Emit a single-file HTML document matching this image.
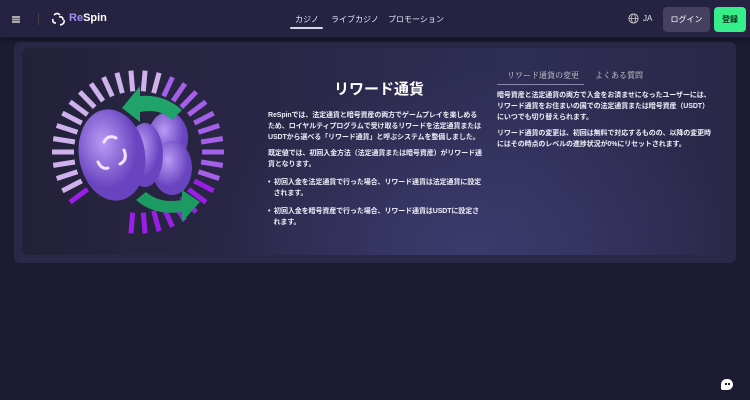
<!DOCTYPE html>
<html><head><meta charset="utf-8"><style>
*{margin:0;padding:0;box-sizing:border-box}
body{width:750px;height:400px;overflow:hidden;background:#1c1b31;font-family:"Liberation Sans","Noto Sans CJK JP",sans-serif;color:#fff;position:relative}
.hdr{position:absolute;left:0;top:0;width:750px;height:38px;background:#252341;border-bottom:1px solid #1a1930;box-shadow:0 2px 4px rgba(0,0,0,.3)}
.nav{position:absolute;top:14px;font-size:8px;color:#e8e6f5}
.outer{position:absolute;left:14px;top:42px;width:722px;height:221px;background:#2a2846;border-radius:6px}
.inner{position:absolute;left:22px;top:48px;width:706px;height:207px;border-radius:6px;background:radial-gradient(ellipse 260px 180px at 450px 200px,#3c3a6c,transparent),linear-gradient(90deg,#232139 0%,#2a2848 40%,#2f2e55 70%,#2a2848 100%)}
.t{font-size:7px;line-height:11px;color:#eeeef8;font-weight:bold;letter-spacing:-.1px}
</style></head><body>
<div class="hdr">
 <div style="position:absolute;left:12px;top:16px;width:8px;height:1.5px;background:#aaa;box-shadow:0 2.5px 0 #aaa,0 5px 0 #aaa"></div>
 <div style="position:absolute;left:38px;top:13px;width:1px;height:12px;background:#444"></div>
 <svg style="position:absolute;left:51px;top:11px" width="16" height="16" viewBox="0 0 16 16"><path d="M3 4 Q6 1 9 4 M2 8 Q1 12 5 12 M13 9 Q14 13 9 14 M8 6 Q12 5 12 9" stroke="#fff" stroke-width="1.6" fill="none"/></svg>
 <div style="position:absolute;left:69px;top:12px;font-size:11px;font-weight:bold"><span style="color:#a48cf0">Re</span>Spin</div>
 <div class="nav" style="left:295px">カジノ</div>
 <div style="position:absolute;left:290px;top:27px;width:33px;height:2px;background:#d8d6ea;border-radius:1px"></div>
 <div class="nav" style="left:331px">ライブカジノ</div>
 <div class="nav" style="left:388px">プロモーション</div>
 <svg style="position:absolute;left:628px;top:13px" width="11" height="11" viewBox="0 0 11 11"><circle cx="5.5" cy="5.5" r="4.6" fill="none" stroke="#ccc" stroke-width=".9"/><ellipse cx="5.5" cy="5.5" rx="2" ry="4.6" fill="none" stroke="#ccc" stroke-width=".8"/><path d="M1 5.5H10" stroke="#ccc" stroke-width=".8"/></svg>
 <div class="nav" style="left:643px;top:14px">JA</div>
 <div style="position:absolute;left:663px;top:7px;width:47px;height:25px;background:#45405f;border-radius:4px;font-size:8px;text-align:center;line-height:25px">ログイン</div>
 <div style="position:absolute;left:714px;top:7px;width:32px;height:25px;background:#36ef8a;border-radius:4px;font-size:8px;font-weight:bold;color:#0c2a1a;text-align:center;line-height:25px">登録</div>
</div>
<div class="outer"></div>
<div class="inner"></div>
<svg style="position:absolute;left:40px;top:60px" width="190" height="180" viewBox="0 0 190 180">
 <defs><radialGradient id="c" cx="40%" cy="35%"><stop offset="0" stop-color="#b89cf5"/><stop offset="1" stop-color="#6a44c0"/></radialGradient></defs>
 <g id="ring" transform="translate(98,92)"></g>
 <ellipse cx="128" cy="78" rx="20" ry="26" fill="url(#c)"/>
 <ellipse cx="132" cy="108" rx="20" ry="27" fill="url(#c)"/>
 <ellipse cx="105" cy="95" rx="18" ry="32" fill="url(#c)"/>
 <ellipse cx="72" cy="95" rx="33" ry="46" fill="url(#c)" transform="rotate(-10 72 95)"/>
 <g stroke="#f0e4ff" stroke-width="3" fill="none" stroke-linecap="round"><path d="M64 82 Q68 74 76 78 M84 90 Q88 100 80 104 M58 102 Q62 110 68 108"/></g>
 <path d="M82 48 L100 26 L100 36 Q124 34 142 50 L132 60 Q120 48 100 52 L100 62 Z" fill="#1fa36a"/>
 <path d="M160 142 L142 162 L142 152 Q114 156 96 140 L106 132 Q120 144 142 140 L142 130 Z" fill="#1c9a62"/>
</svg>
<script>
(function(){var g=document.getElementById('ring'),s='';var n=38;for(var i=0;i<n;i++){var a=i/n*Math.PI*2;var c=Math.cos(a),d=Math.sin(a);var r1=64,r2=86;var col;var ang=a*180/Math.PI;if(ang>150&&ang<290)col='#cfb2ec';else if(ang>=290||ang<20)col='#a560ea';else col='#9a1fe6';if(ang>100&&ang<135)continue;s+='<line x1="'+(c*r1).toFixed(1)+'" y1="'+(d*r1*0.95).toFixed(1)+'" x2="'+(c*r2).toFixed(1)+'" y2="'+(d*r2*0.95).toFixed(1)+'" stroke="'+col+'" stroke-width="5"/>';}g.innerHTML=s;})();
</script>
<div style="position:absolute;left:334px;top:78px;font-size:15px;font-weight:bold">リワード通貨</div>
<div class="t" style="position:absolute;left:268px;top:110px;width:214px">ReSpinでは、法定通貨と暗号資産の両方でゲームプレイを楽しめるため、ロイヤルティプログラムで受け取るリワードを法定通貨またはUSDTから選べる「リワード通貨」と呼ぶシステムを整備しました。</div>
<div class="t" style="position:absolute;left:268px;top:148px;width:216px">既定値では、初回入金方法（法定通貨または暗号資産）がリワード通貨となります。</div>
<div class="t" style="position:absolute;left:268px;top:177px;width:226px">•&nbsp; 初回入金を法定通貨で行った場合、リワード通貨は法定通貨に設定<br>&nbsp;&nbsp;&nbsp;されます。</div>
<div class="t" style="position:absolute;left:268px;top:206px;width:226px">•&nbsp; 初回入金を暗号資産で行った場合、リワード通貨はUSDTに設定さ<br>&nbsp;&nbsp;&nbsp;れます。</div>
<div style="position:absolute;left:507px;top:70px;font-size:8px;color:#ddd;font-family:'Liberation Serif','Noto Serif CJK SC',serif">リワード通貨の変更</div>
<div style="position:absolute;left:595px;top:70px;font-size:8px;color:#ddd;font-family:'Liberation Serif','Noto Serif CJK SC',serif">よくある質問</div>
<div style="position:absolute;left:497px;top:84px;width:87px;height:1px;background:#8a86a8"></div>
<div class="t" style="position:absolute;left:497px;top:90px;width:222px">暗号資産と法定通貨の両方で入金をお済ませになったユーザーには、<br>リワード通貨をお住まいの国での法定通貨または暗号資産（USDT）<br>にいつでも切り替えられます。</div>
<div class="t" style="position:absolute;left:497px;top:128px;width:222px">リワード通貨の変更は、初回は無料で対応するものの、以降の変更時<br>にはその時点のレベルの進捗状況が0%にリセットされます。</div>
<div style="position:absolute;left:721px;top:379px;width:12px;height:11px;background:#fff;border-radius:6px 6px 6px 2px"></div>
<div style="position:absolute;left:725px;top:383px;width:1.5px;height:2px;background:#1c1b31;box-shadow:3px 0 0 #1c1b31"></div>
</body></html>
